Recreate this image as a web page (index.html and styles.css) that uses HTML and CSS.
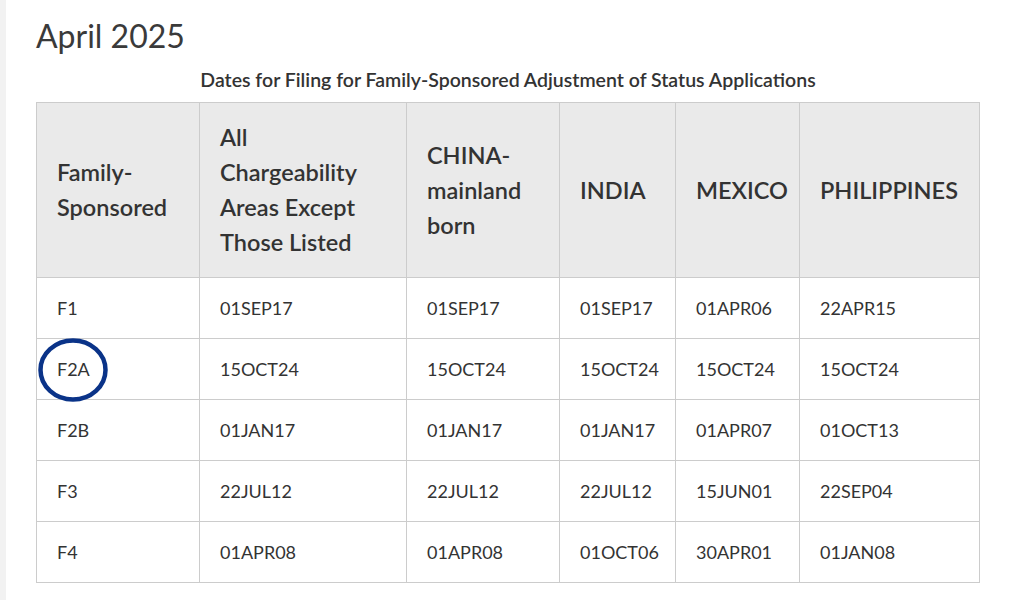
FILE: index.html
```html
<!DOCTYPE html>
<html lang="en">
<head>
<meta charset="utf-8">
<title>April 2025</title>
<link rel="stylesheet" href="styles.css">
</head>
<body>
<div class="page">
  <h1 class="title">April 2025</h1>
  <table class="bulletin">
    <caption class="caption">Dates for Filing for Family-Sponsored Adjustment of Status Applications</caption>
    <colgroup>
      <col class="c1"><col class="c2"><col class="c3"><col class="c4"><col class="c5"><col class="c6">
    </colgroup>
    <thead>
      <tr>
        <th>Family-<br>Sponsored</th>
        <th>All<br>Chargeability<br>Areas Except<br>Those Listed</th>
        <th>CHINA-<br>mainland<br>born</th>
        <th>INDIA</th>
        <th>MEXICO</th>
        <th>PHILIPPINES</th>
      </tr>
    </thead>
    <tbody>
      <tr><td>F1</td><td>01SEP17</td><td>01SEP17</td><td>01SEP17</td><td>01APR06</td><td>22APR15</td></tr>
      <tr><td class="marked">F2A<svg class="ring" viewBox="0 0 70 64" aria-hidden="true"><ellipse cx="35" cy="32" rx="32.5" ry="29.5" fill="none" stroke="#0a3388" stroke-width="4.5"/></svg></td><td>15OCT24</td><td>15OCT24</td><td>15OCT24</td><td>15OCT24</td><td>15OCT24</td></tr>
      <tr><td>F2B</td><td>01JAN17</td><td>01JAN17</td><td>01JAN17</td><td>01APR07</td><td>01OCT13</td></tr>
      <tr><td>F3</td><td>22JUL12</td><td>22JUL12</td><td>22JUL12</td><td>15JUN01</td><td>22SEP04</td></tr>
      <tr><td>F4</td><td>01APR08</td><td>01APR08</td><td>01OCT06</td><td>30APR01</td><td>01JAN08</td></tr>
    </tbody>
  </table>
</div>
</body>
</html>
```
FILE: styles.css
```css
html, body {
  margin: 0;
  padding: 0;
  background: #ffffff;
}
body {
  font-family: "Lato", "Liberation Sans", sans-serif;
  color: #333333;
}
.page {
  border-left: 6px solid #f2f2f2;
  padding: 14px 0 0 30px;
  min-height: 600px;
  box-sizing: border-box;
}
.title {
  margin: 0 0 10px 0;
  font-size: 32px;
  font-weight: 400;
  line-height: 44px;
  color: #3a3a3a;
}
.bulletin {
  border-collapse: collapse;
  width: 943px;
  table-layout: fixed;
}
.caption {
  font-size: 19.5px;
  font-weight: 600;
  line-height: 24px;
  padding-bottom: 10px;
  color: #333333;
}
.c1 { width: 163px; }
.c2 { width: 207px; }
.c3 { width: 153px; }
.c4 { width: 116px; }
.c5 { width: 124px; }
.c6 { width: 180px; }
.bulletin th,
.bulletin td {
  border: 1px solid #cccccc;
  text-align: left;
  padding: 0 0 0 20px;
  color: #333333;
}
.bulletin th {
  background: #eaeaea;
  font-size: 23.5px;
  font-weight: 600;
  line-height: 35px;
  height: 174px;
  box-sizing: border-box;
  padding-top: 17px;
  padding-bottom: 17px;
}
.bulletin td {
  font-size: 18px;
  font-weight: 400;
  height: 61px;
  box-sizing: border-box;
}
.marked {
  position: relative;
}
.ring {
  position: absolute;
  left: 1px;
  top: -1px;
  width: 70px;
  height: 64px;
}
```
